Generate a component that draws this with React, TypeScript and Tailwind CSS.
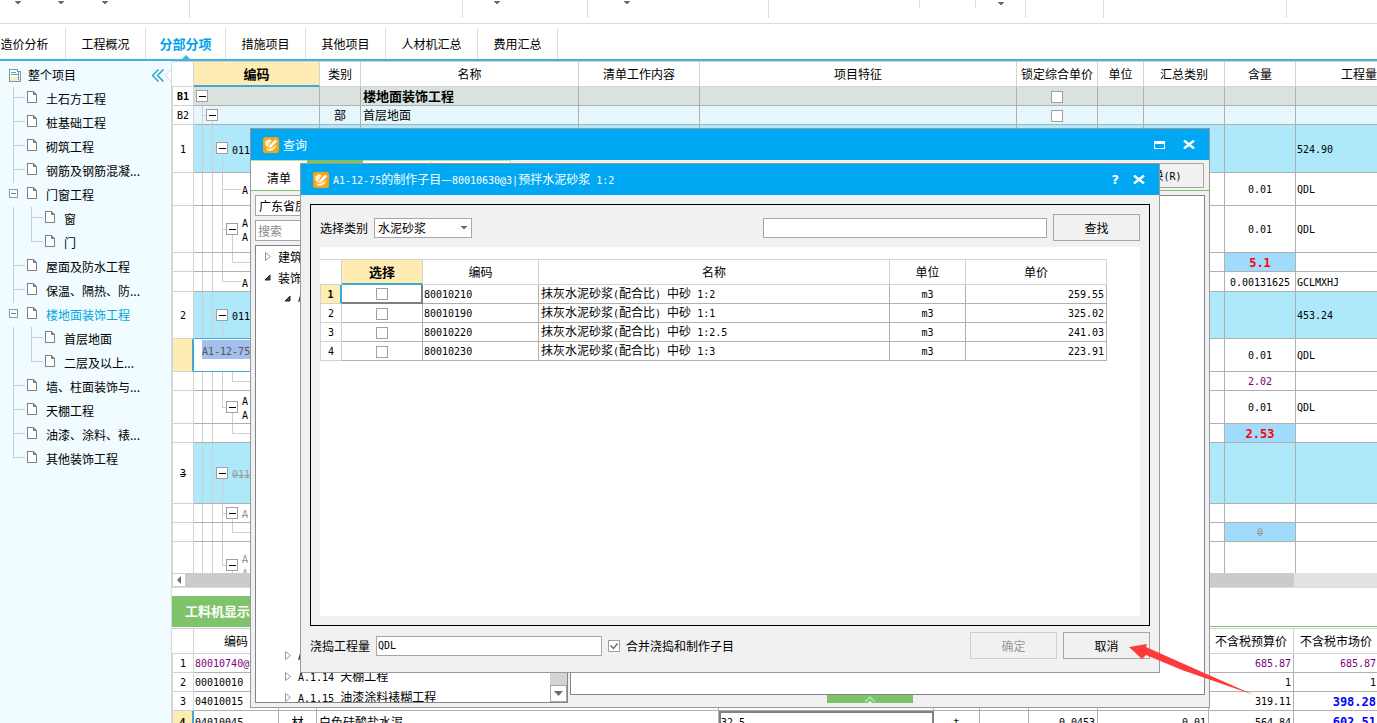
import clsx from "clsx";
import type { ReactNode } from "react";

interface TextProps {
  children: string;
}

// 英数字は等幅、漢字は全角 12px で描く
function Mixed({ children }: TextProps) {
  return (
    <>
      {children.split(/([\x20-\x7e]+)/).map((part, i) =>
        i % 2 ? (
          <span
            key={`${i}-${part}`}
            className="whitespace-pre font-['DejaVu_Sans_Mono',monospace] text-[10px]"
          >
            {part}
          </span>
        ) : (
          part
        ),
      )}
    </>
  );
}

function Caret() {
  return (
    <svg width="6" height="4" viewBox="0 0 6 4" aria-hidden="true">
      <path d="M0 0h6v1H5v1H4v1H2V2H1V1H0z" fill="#6b6b7b" />
    </svg>
  );
}

function AppIcon() {
  return (
    <svg width="16" height="16" viewBox="0 0 16 16" aria-hidden="true">
      <rect width="16" height="16" rx="2.500" fill="#fba413" />
      <path d="M2 4.500L6 2l3 1.500L6 7l-1 4-2.500-3z" fill="#fff3dc" />
      <path d="M6.500 8.500l5.500-6 2.200 1.800-5.700 6-2.800.7z" fill="#fff" />
      <path d="M2.500 10.500C4 12.500 9 12.500 13.500 7.500 13 12 8.500 15 4.500 13.500z" fill="#fff3dc" />
    </svg>
  );
}

function CloseIcon() {
  return (
    <svg width="12" height="9" viewBox="0 0 12 9" aria-hidden="true">
      <path d="M1 .5l10 8M11 .5l-10 8" stroke="#fff" strokeWidth="2.4" />
    </svg>
  );
}

function CheckBox({ label, checked }: { label: string; checked?: boolean }) {
  return (
    <span className="relative inline-block size-3 align-middle">
      <input
        type="checkbox"
        aria-label={label}
        defaultChecked={checked}
        className="peer block size-3 appearance-none border border-[#a0a0a0] bg-white"
      />
      <svg
        className="pointer-events-none absolute inset-0 hidden peer-checked:block"
        width="12"
        height="12"
        aria-hidden="true"
      >
        <path d="M2.5 5.5l3 3 4-5" fill="none" stroke="#6b6b7b" strokeWidth="1.5" />
      </svg>
    </span>
  );
}

// ---- 上部のツールバーとタブ ----

interface ToolGroup {
  className: string;
  carets?: string[];
}

const toolGroups: ToolGroup[] = [
  { className: "w-[190px]", carets: ["w-9", "w-[50px] pt-px", "w-[38px]"] },
  { className: "w-[273px]" },
  { className: "w-[125px]", carets: ["w-[67px]"] },
  { className: "w-[181px]", carets: ["w-[78px]"] },
];

const tabs = [
  { label: "造价分析", className: "w-[66px] pr-4" },
  { label: "工程概况", className: "w-20" },
  { label: "分部分项", className: "w-20", active: true },
  { label: "措施项目", className: "w-20" },
  { label: "其他项目", className: "w-20" },
  { label: "人材机汇总", className: "w-[92px]" },
  { label: "费用汇总", className: "w-20" },
];

function Toolbar() {
  return (
    <div className="h-6 shrink-0 border-b border-[#dcdcdc]">
      <div className="flex h-[18px]">
        {toolGroups.map((group) => (
          <div
            key={group.className}
            className={clsx("flex shrink-0 items-start border-r border-[#dcdcdc]", group.className)}
          >
            {group.carets?.map((caret) => (
              <button
                key={caret}
                type="button"
                aria-label="更多"
                className={clsx("flex justify-center pt-px", caret)}
              >
                <Caret />
              </button>
            ))}
          </div>
        ))}
        <div className="flex w-[257px] shrink-0 border-r border-[#dcdcdc]">
          <div className="h-2 w-[151px] border-r border-[#dcdcdc]" />
          <div className="h-2 w-14 border-r border-[#dcdcdc]" />
          <button type="button" aria-label="更多" className="flex w-[49px] justify-center pt-0.5">
            <Caret />
          </button>
        </div>
        <div className="w-[78px] shrink-0 border-r border-[#dcdcdc]" />
        <div className="w-[183px] shrink-0 border-r border-[#dcdcdc]" />
      </div>
    </div>
  );
}

function TabBar() {
  return (
    <nav className="flex h-[37px] shrink-0 items-end border-b-2 border-[#3fb4de]">
      {tabs.map((tab) => (
        <button
          key={tab.label}
          type="button"
          className={clsx(
            "relative flex h-[31px] items-center justify-center border-r border-[#dcdcdc]",
            tab.className,
            tab.active && "text-[13px] font-bold text-[#00a2ea]",
          )}
        >
          {tab.label}
          {tab.active && (
            <svg className="absolute bottom-0 left-9" width="8" height="4" aria-hidden="true">
              <path d="M0 4l4-4 4 4z" fill="#3fb4de" />
            </svg>
          )}
        </button>
      ))}
    </nav>
  );
}

// ---- 左のプロジェクトツリー ----

interface ProjectNode {
  label: string;
  child?: boolean;
  open?: boolean;
  last?: boolean;
  active?: boolean;
}

const projectNodes: ProjectNode[] = [
  { label: "土石方工程" },
  { label: "桩基础工程" },
  { label: "砌筑工程" },
  { label: "钢筋及钢筋混凝..." },
  { label: "门窗工程", open: true },
  { label: "窗", child: true },
  { label: "门", child: true, last: true },
  { label: "屋面及防水工程" },
  { label: "保温、隔热、防..." },
  { label: "楼地面装饰工程", open: true, active: true },
  { label: "首层地面", child: true },
  { label: "二层及以上...", child: true, last: true },
  { label: "墙、柱面装饰与..." },
  { label: "天棚工程" },
  { label: "油漆、涂料、裱..." },
  { label: "其他装饰工程", last: true },
];

function ProjectRow({ node }: { node: ProjectNode }) {
  const x = node.child ? 31 : 13;
  const width = node.child ? 56 : 38;
  return (
    <li className="flex h-6 items-center">
      <svg
        width={width}
        height="24"
        className="shrink-0"
        shapeRendering="crispEdges"
        fill="none"
        stroke="#c4cdd0"
        aria-hidden="true"
      >
        {node.child && <path d="M13.5 0v24" />}
        {node.open ? (
          <>
            <rect x="9.5" y="6.5" width="8" height="8" stroke="#8f9a9e" fill="#fff" />
            <path d="M11 10.5h5" stroke="#2a9dc4" />
          </>
        ) : (
          <path d={`M${x + 0.5} 0V${node.last ? 11 : 24}M${x} 10.5h12`} />
        )}
        <path
          d={`M${width - 10.5} 4.5h6l3 3v8h-9z`}
          stroke="#808080"
          fill="#fff"
        />
        <path d={`M${width - 5} 4l4 4h-4z`} stroke="none" fill="#808080" />
      </svg>
      <a
        href="#project"
        className={clsx("whitespace-nowrap pl-2", node.active && "text-[#00a6dd]")}
      >
        {node.label}
      </a>
    </li>
  );
}

function Sidebar() {
  return (
    <aside className="w-[172px] shrink-0 border-r border-[#d8d8d8] bg-[#f0fcff] pt-0.5">
      <div className="flex h-6 items-center pl-[9px]">
        <svg width="12" height="13" shapeRendering="crispEdges" aria-hidden="true">
          <path d="M.5.5h8v2h3v10H.5z" fill="#fff" stroke="#8a9194" />
          <path d="M1 8h10v4H1z" fill="#fdebb8" />
          <path d="M2 3.5h5M2 5.5h7M9.500 3v8" stroke="#39a9d6" />
        </svg>
        <span className="flex-1 pl-[7px]">整个项目</span>
        <button type="button" aria-label="收起" className="pr-px">
          <svg width="12" height="13" fill="none" stroke="#2aa3cc" strokeWidth="1.5" aria-hidden="true">
            <path d="M6.500 .5l-6 6 6 6M11.500 .5l-6 6 6 6" />
          </svg>
        </button>
        <svg width="6" height="13" className="shrink-0" aria-hidden="true">
          <path d="M6 .5L.5 6.500 6 12.500" fill="#fff" stroke="#d8d8d8" />
        </svg>
      </div>
      <ul>
        {projectNodes.map((node) => (
          <ProjectRow key={node.label} node={node} />
        ))}
      </ul>
    </aside>
  );
}

// ---- 清单の表 ----

interface BillRow {
  id: string;
  no?: string;
  height: number;
  level: number;
  box?: boolean;
  last?: boolean;
  hideParent?: boolean;
  codes?: string[];
  deleted?: boolean;
  editing?: boolean;
  tone?: "head" | "part" | "item";
  kind?: string;
  name?: string;
  lock?: boolean;
  amount?: string;
  amountClass?: string;
  quantity?: string;
}

const diffAmount = "bg-[#a0dbfc] font-bold text-[#f00] [&_span]:text-[12px]";

const billRows: BillRow[] = [
  { id: "b1", no: "B1", height: 19, level: 0, box: true, tone: "head", name: "楼地面装饰工程", lock: true },
  { id: "b2", no: "B2", height: 19, level: 1, box: true, tone: "part", kind: "部", name: "首层地面", lock: true },
  { id: "r1", no: "1", height: 48, level: 2, box: true, codes: ["011"], tone: "item", quantity: "524.90" },
  { id: "r1a", height: 33, level: 3, codes: ["A"], amount: "0.01", quantity: "QDL" },
  { id: "r1b", height: 47, level: 3, box: true, codes: ["A", "A"], amount: "0.01", quantity: "QDL" },
  { id: "r1c", height: 19, level: 4, last: true, amount: "5.1", amountClass: diffAmount },
  { id: "r1d", height: 20, level: 3, last: true, codes: ["A"], amount: "0.00131625", quantity: "GCLMXHJ" },
  { id: "r2", no: "2", height: 47, level: 2, box: true, codes: ["011"], tone: "item", quantity: "453.24" },
  { id: "r2a", height: 33, level: 3, editing: true, codes: ["A1-12-75"], amount: "0.01", quantity: "QDL" },
  { id: "r2b", height: 19, level: 4, last: true, amount: "2.02", amountClass: "text-[#800080]" },
  { id: "r2c", height: 33, level: 3, box: true, last: true, codes: ["A", "A"], amount: "0.01", quantity: "QDL" },
  { id: "r2d", height: 19, level: 4, last: true, hideParent: true, amount: "2.53", amountClass: diffAmount },
  { id: "r3", no: "3", height: 61, level: 2, box: true, codes: ["011"], deleted: true, tone: "item" },
  { id: "r3a", height: 19, level: 3, box: true, codes: ["A"], deleted: true },
  { id: "r3b", height: 19, level: 4, last: true, amount: "0", amountClass: "bg-[#a0dbfc] text-[#999] [&_span]:line-through" },
  { id: "r3c", height: 47, level: 3, box: true, last: true, codes: ["A", "A"], deleted: true },
];

const tones = {
  head: "bg-[#dae2de]",
  part: "bg-[#e5f7fc]",
  item: "bg-[#aee8fb]",
};

function BillTree({ row }: { row: BillRow }) {
  const height = row.height - 1;
  const mid = Math.floor(height / 2) + 0.5;
  const lineX = (level: number) => 8.5 + level * 10;
  const own = lineX(row.level);
  const parent = lineX(row.level - 1);
  let d = "";
  for (let i = 0; i < row.level - 1; i++) {
    if (row.hideParent && i === row.level - 2) continue;
    d += `M${lineX(i)} 0V${height}`;
  }
  if (row.level > 0) {
    d += `M${parent} 0V${row.last ? mid : height}M${parent} ${mid}H${row.box ? own : own + 8}`;
  }
  if (row.box) d += `M${own} ${mid}V${height}`;

  return (
    <svg
      width={18 + row.level * 10}
      height={height}
      className="shrink-0"
      shapeRendering="crispEdges"
      fill="none"
      stroke="#cfcfcf"
      aria-hidden="true"
    >
      <path d={d} />
      {row.box && (
        <>
          <rect x={own - 6} y={mid - 6} width="11" height="11" fill="#fff" stroke="#a0a0a0" />
          <path d={`M${own - 3.500} ${mid}h7`} stroke="#000" />
        </>
      )}
    </svg>
  );
}

const cell = "border-b border-r border-[#b0b0b0] p-0 whitespace-nowrap overflow-hidden";
const headCell =
  "border-b border-r border-t border-[#d3d3d3] bg-white p-0 font-normal whitespace-nowrap overflow-hidden";
const rowHead = "border-b border-r border-l border-[#d3d3d3] p-0";

function BillTable() {
  return (
    <table className="w-[1251px] table-fixed border-separate border-spacing-0">
      <colgroup>
        <col className="w-[22px]" />
        <col className="w-[126px]" />
        <col className="w-[41px]" />
        <col className="w-[218px]" />
        <col className="w-[121px]" />
        <col className="w-[317px]" />
        <col className="w-[81px]" />
        <col className="w-[46px]" />
        <col className="w-[81px]" />
        <col className="w-[71px]" />
        <col className="w-[127px]" />
      </colgroup>
      <thead>
        <tr className="h-[26px]">
          <th className={headCell} aria-label="序号" />
          <th className="border-b-2 border-r border-t border-b-[#3da9d4] border-r-[#d3d3d3] border-t-[#d3d3d3] bg-[#feecb2] p-0 text-[13px] font-bold">
            编码
          </th>
          {["类别", "名称", "清单工作内容", "项目特征", "锁定综合单价", "单位", "汇总类别", "含量", "工程量"].map(
            (label) => (
              <th key={label} className={headCell}>
                {label}
              </th>
            ),
          )}
        </tr>
      </thead>
      <tbody>
        {billRows.map((row) => (
          <tr key={row.id} style={{ height: row.height }} className={row.tone && tones[row.tone]}>
            <th
              className={clsx(
                rowHead,
                row.editing ? "border-r-2 border-r-[#3da9d4] bg-[#feecb2]" : "bg-white",
                row.tone === "head" ? "font-bold" : "font-normal",
                row.deleted && "[&_span]:line-through",
              )}
            >
              <Mixed>{row.no ?? ""}</Mixed>
            </th>
            {row.editing ? (
              <td className="border-b border-r border-b-[#3da9d4] border-r-[#b0b0b0] p-0 pl-2 pb-2 align-middle shadow-[0_-1px_0_#3da9d4]">
                <span className="bg-[#a3c0ec] py-px text-[#555]">
                  <Mixed>{row.codes?.[0] ?? ""}</Mixed>
                </span>
              </td>
            ) : (
              <td className={cell}>
                <div className="flex items-center">
                  <BillTree row={row} />
                  <div className={clsx("leading-[14px]", row.deleted && "text-[#999] [&_span]:line-through")}>
                    {row.codes?.map((code, i) => (
                      <div key={`${code}-${i}`} className="h-[14px]">
                        <Mixed>{code}</Mixed>
                      </div>
                    ))}
                  </div>
                </div>
              </td>
            )}
            <td className={clsx(cell, "text-center")}>{row.kind}</td>
            <td className={clsx(cell, "pl-0.5", row.tone === "head" && "text-[13px] font-bold")}>
              {row.name}
            </td>
            <td className={cell} />
            <td className={cell} />
            <td className={clsx(cell, "text-center leading-[12px]")}>
              {row.lock && <CheckBox label="锁定综合单价" />}
            </td>
            <td className={cell} />
            <td className={cell} />
            <td className={clsx(cell, "text-center", row.amountClass)}>
              <Mixed>{row.amount ?? ""}</Mixed>
            </td>
            <td className={clsx(cell, "pl-px")}>
              <Mixed>{row.quantity ?? ""}</Mixed>
            </td>
          </tr>
        ))}
      </tbody>
    </table>
  );
}

// ---- 工料机の表 ----

const purple = "text-[#800080]";
const blue = "font-bold text-[#00f] [&_span]:text-[12px]";

const resourceRows = [
  { code: "80010740@", budget: "685.87", market: "685.87", codeClass: purple, budgetClass: purple, marketClass: purple },
  { code: "00010010", budget: "1", market: "1" },
  { code: "04010015", budget: "319.11", market: "398.28", marketClass: blue },
  {
    code: "04010045",
    kind: "材",
    name: "白色硅酸盐水泥",
    spec: "32.5",
    unit: "t",
    usage: "0.0453",
    total: "0.01",
    budget: "564.84",
    market: "602.51",
    marketClass: blue,
    current: true,
  },
];

function ResourceTable() {
  return (
    <table className="w-[1207px] table-fixed border-separate border-spacing-0">
      <colgroup>
        <col className="w-[22px]" />
        <col className="w-[85px]" />
        <col className="w-[38px]" />
        <col className="w-[402px]" />
        <col className="w-[215px]" />
        <col className="w-[46px]" />
        <col className="w-[49px]" />
        <col className="w-[69px]" />
        <col className="w-[111px]" />
        <col className="w-[85px]" />
        <col className="w-[85px]" />
      </colgroup>
      <thead>
        <tr className="h-[26px]">
          <th className={headCell} aria-label="序号" />
          <th className={headCell}>编码</th>
          <th className={headCell} colSpan={7} aria-label="材料" />
          <th className={headCell}>不含税预算价</th>
          <th className={headCell}>不含税市场价</th>
        </tr>
      </thead>
      <tbody>
        {resourceRows.map((row, i) => (
          <tr key={row.code} className="h-[19px]">
            <th
              className={clsx(
                rowHead,
                row.current ? "border-r-2 border-r-[#3da9d4] bg-[#feecb2] font-bold" : "font-normal",
              )}
            >
              <Mixed>{String(i + 1)}</Mixed>
            </th>
            <td className={clsx(cell, "pl-px", row.codeClass)}>
              <Mixed>{row.code}</Mixed>
            </td>
            <td className={clsx(cell, "text-center")}>{row.kind}</td>
            <td className={clsx(cell, "pl-0.5")}>{row.name}</td>
            <td className={row.current ? "border-2 border-[#808080] p-0" : cell}>
              <Mixed>{row.spec ?? ""}</Mixed>
            </td>
            <td className={clsx(cell, "text-center")}>
              <Mixed>{row.unit ?? ""}</Mixed>
            </td>
            <td className={cell} />
            <td className={clsx(cell, "pr-0.5 text-right")}>
              <Mixed>{row.usage ?? ""}</Mixed>
            </td>
            <td className={clsx(cell, "pr-0.5 text-right")}>
              <Mixed>{row.total ?? ""}</Mixed>
            </td>
            <td className={clsx(cell, "pr-0.5 text-right", row.budgetClass)}>
              <Mixed>{row.budget}</Mixed>
            </td>
            <td className={clsx(cell, "pr-0.5 text-right", row.marketClass)}>
              <Mixed>{row.market}</Mixed>
            </td>
          </tr>
        ))}
      </tbody>
    </table>
  );
}

// ---- ダイアログ ----

interface DialogTitleProps {
  title: string;
  children: ReactNode;
}

function DialogTitle({ title, children }: DialogTitleProps) {
  return (
    <header className="flex h-[31px] shrink-0 items-center bg-[#00a8f3] pl-3 pr-[14px] text-white">
      <AppIcon />
      <h2 className="flex-1 pl-1">
        <Mixed>{title}</Mixed>
      </h2>
      {children}
    </header>
  );
}

function Closed() {
  return (
    <svg width="9" height="9" className="shrink-0" fill="none" stroke="#999" aria-hidden="true">
      <path d="M2.500 .5v8l5-4z" />
    </svg>
  );
}

function Opened() {
  return (
    <svg width="9" height="9" className="shrink-0" aria-hidden="true">
      <path d="M7 2v5H2z" fill="#505050" stroke="#222" />
    </svg>
  );
}

function QueryDialog() {
  return (
    <section className="absolute left-[250px] top-[128px] flex h-[580px] w-[960px] flex-col border border-[#999] bg-[#f1f1f1]">
      <DialogTitle title="查询">
        <button type="button" aria-label="最大化" className="mr-[18px]">
          <svg width="11" height="8" shapeRendering="crispEdges" aria-hidden="true">
            <path d="M0 0h11v8H0zM1 3v4h9V3z" fill="#fff" fillRule="evenodd" />
          </svg>
        </button>
        <button type="button" aria-label="关闭">
          <CloseIcon />
        </button>
      </DialogTitle>
      <div className="flex h-[31px] shrink-0 items-start border-b border-[#7cc36a]">
        <button type="button" className="h-[30px] w-14 border-t border-[#b5e2a4] bg-white pt-1">
          清单
        </button>
        <button type="button" aria-label="定额" className="h-[30px] w-14 bg-[#7cc36a]" />
        <div className="h-[30px] w-[68px] border-r border-t border-[#b5e2a4] bg-white" />
        <div className="h-[30px] w-20 border-r border-t border-[#b5e2a4] bg-white" />
        <button
          type="button"
          className="ml-auto mr-[5px] mt-[3px] h-[25px] w-[87px] border border-[#a6a6a6]"
        >
          <Mixed>替换(R)</Mixed>
        </button>
      </div>
      <div className="flex min-h-0 flex-1 gap-[2px] p-1">
        <div className="flex w-[313px] shrink-0 flex-col gap-1">
          <select
            aria-label="定额库"
            className="h-[21px] shrink-0 appearance-none border border-[#a6a6a6] bg-white px-[3px]"
          >
            <option>广东省房</option>
          </select>
          <input
            type="text"
            placeholder="搜索"
            aria-label="搜索"
            className="h-[21px] shrink-0 border border-[#a6a6a6] bg-white px-0.5 placeholder:text-[#888]"
          />
          <div className="flex min-h-0 flex-1 overflow-hidden border border-[#828490] bg-white">
            <ul className="flex-1">
              <li className="flex h-[21px] items-center gap-[6px] pl-[7px]">
                <Closed />
                建筑
              </li>
              <li className="flex h-[21px] items-center gap-[6px] pl-[7px]">
                <Opened />
                装饰
              </li>
              <li className="flex h-[21px] items-center gap-[6px] pl-[27px]">
                <Opened />
                <Mixed>A</Mixed>
              </li>
              <li className="h-[336px]" />
              {["A", "A.1.14 天棚工程", "A.1.15 油漆涂料裱糊工程"].map((label) => (
                <li key={label} className="flex h-[21px] items-center gap-[6px] pl-[27px]">
                  <Closed />
                  <span>
                    <Mixed>{label}</Mixed>
                  </span>
                </li>
              ))}
            </ul>
            <div className="flex w-[17px] flex-col justify-end bg-[#d3d3d3]">
              <button
                type="button"
                aria-label="向下滚动"
                className="flex h-[17px] items-center justify-center border border-[#a6a6a6] bg-white"
              >
                <svg width="9" height="5" aria-hidden="true">
                  <path d="M0 0h9L4.500 5z" fill="#6b6b7b" />
                </svg>
              </button>
            </div>
          </div>
        </div>
        <div className="flex flex-1 flex-col items-center">
          <div className="w-full flex-1 border border-[#828490] bg-white" />
          <div className="mr-9 flex h-2 w-[86px] items-end justify-center bg-[#7cc36a]">
            <svg width="10" height="7" fill="none" aria-hidden="true">
              <path d="M0 6l5-5 5 5" stroke="#b9e3ad" strokeWidth="1.500" />
              <path d="M3 7l2-2 2 2z" fill="#fff" />
            </svg>
          </div>
        </div>
      </div>
    </section>
  );
}

const mortars = [
  { code: "80010210", name: "抹灰水泥砂浆(配合比) 中砂 1:2", price: "259.55" },
  { code: "80010190", name: "抹灰水泥砂浆(配合比) 中砂 1:1", price: "325.02" },
  { code: "80010220", name: "抹灰水泥砂浆(配合比) 中砂 1:2.5", price: "241.03" },
  { code: "80010230", name: "抹灰水泥砂浆(配合比) 中砂 1:3", price: "223.91" },
];

function MortarTable() {
  return (
    <table className="w-[787px] table-fixed border-separate border-spacing-0">
      <colgroup>
        <col className="w-[22px]" />
        <col className="w-[81px]" />
        <col className="w-[116px]" />
        <col className="w-[351px]" />
        <col className="w-[76px]" />
        <col className="w-[141px]" />
      </colgroup>
      <thead>
        <tr className="h-[26px]">
          <th className={headCell} aria-label="序号" />
          <th className="border-b-2 border-r border-t border-b-[#3da9d4] border-r-[#d3d3d3] border-t-[#d3d3d3] bg-[#feecb2] p-0 text-[13px] font-bold">
            选择
          </th>
          {["编码", "名称", "单位", "单价"].map((label) => (
            <th key={label} className={headCell}>
              {label}
            </th>
          ))}
        </tr>
      </thead>
      <tbody>
        {mortars.map((row, i) => (
          <tr key={row.code} className="h-[19px]">
            <th
              className={clsx(
                rowHead,
                i === 0 ? "border-r-2 border-r-[#3da9d4] bg-[#feecb2] font-bold" : "font-normal",
              )}
            >
              <Mixed>{String(i + 1)}</Mixed>
            </th>
            <td
              className={clsx(
                "p-0 text-center leading-[12px]",
                i === 0 ? "border-b-2 border-r-2 border-[#808080]" : "border-b border-r border-[#b0b0b0]",
              )}
            >
              <CheckBox label={`选择 ${row.code}`} />
            </td>
            <td className={clsx(cell, "pl-px")}>
              <Mixed>{row.code}</Mixed>
            </td>
            <td className={clsx(cell, "pl-0.5")}>
              <Mixed>{row.name}</Mixed>
            </td>
            <td className={clsx(cell, "text-center")}>
              <Mixed>m3</Mixed>
            </td>
            <td className={clsx(cell, "pr-0.5 text-right")}>
              <Mixed>{row.price}</Mixed>
            </td>
          </tr>
        ))}
      </tbody>
    </table>
  );
}

function MortarDialog() {
  return (
    <section className="absolute left-[300px] top-[163px] flex h-[510px] w-[860px] flex-col border border-[#999] bg-[#f1f1f1]">
      <DialogTitle title="A1-12-75的制作子目—80010630@3|预拌水泥砂浆 1:2">
        <button
          type="button"
          aria-label="帮助"
          className="mr-[14px] font-['DejaVu_Sans',sans-serif] text-[13px] font-bold"
        >
          ?
        </button>
        <button type="button" aria-label="关闭">
          <CloseIcon />
        </button>
      </DialogTitle>
      <div className="mx-[9px] mt-[9px] flex min-h-0 flex-1 flex-col border border-black px-[9px] pb-[9px]">
        <div className="flex h-[42px] shrink-0 items-center pt-[3px]">
          <label htmlFor="category">选择类别</label>
          <span className="relative ml-[6px]">
            <select
              id="category"
              className="block h-5 w-[98px] appearance-none border border-[#a6a6a6] bg-white px-[3px]"
            >
              <option>水泥砂浆</option>
            </select>
            <span className="pointer-events-none absolute inset-y-0 right-[5px] flex items-center">
              <Caret />
            </span>
          </span>
          <input
            type="text"
            aria-label="关键字"
            className="ml-auto h-5 w-[284px] border border-[#a6a6a6] bg-white px-1"
          />
          <button type="button" className="ml-[6px] h-[27px] w-[87px] border border-[#a6a6a6]">
            查找
          </button>
        </div>
        <div className="flex-1 bg-white pt-3">
          <MortarTable />
        </div>
      </div>
      <div className="flex h-[46px] shrink-0 items-start px-[9px] pt-[6px]">
        <div className="flex h-[27px] flex-1 items-center">
          <label htmlFor="quantity">浇捣工程量</label>
          <input
            id="quantity"
            type="text"
            defaultValue="QDL"
            className="ml-[6px] h-5 w-[226px] border border-[#a6a6a6] bg-white px-px font-['DejaVu_Sans_Mono',monospace] text-[10px]"
          />
          <label className="ml-[6px] flex items-center gap-[6px]">
            <CheckBox label="合并浇捣和制作子目" checked />
            合并浇捣和制作子目
          </label>
        </div>
        <button
          type="button"
          disabled
          className="h-[27px] w-[87px] border border-[#cfcfcf] text-[#999]"
        >
          确定
        </button>
        <button type="button" className="ml-[6px] h-[27px] w-[87px] border border-[#a6a6a6]">
          取消
        </button>
      </div>
    </section>
  );
}

export default function App() {
  return (
    <div className="relative flex h-screen flex-col overflow-hidden bg-white font-['Noto_Sans_CJK_SC',sans-serif] text-[12px] leading-[16px] text-black">
      <Toolbar />
      <TabBar />
      <div className="flex min-h-0 flex-1">
        <Sidebar />
        <main className="flex min-w-0 flex-1 flex-col">
          <div className="min-h-0 flex-1 overflow-hidden">
            <BillTable />
          </div>
          <div className="flex h-[150px] shrink-0 flex-col overflow-hidden">
            <div className="flex h-[15px] shrink-0 border-b border-[#dcdcdc] bg-[#e2e2e2]">
              <button
                type="button"
                aria-label="向左滚动"
                className="flex w-[14px] shrink-0 items-center justify-center border border-[#cfcfcf] bg-white"
              >
                <svg width="4" height="8" aria-hidden="true">
                  <path d="M4 0v8L0 4z" fill="#6b6b7b" />
                </svg>
              </button>
              <div className="w-[1108px] shrink-0 bg-[#cbcbcb]" />
            </div>
            <div className="mb-px mt-2 flex h-[31px] shrink-0 border-b border-[#7cc36a]">
              <button
                type="button"
                className="w-[92px] bg-[#7fc46b] pl-[13px] text-left text-[13px] font-bold whitespace-nowrap text-white"
              >
                工料机显示
              </button>
            </div>
            <ResourceTable />
          </div>
        </main>
      </div>
      <QueryDialog />
      <MortarDialog />
      <svg
        className="pointer-events-none absolute left-[1129px] top-[643px]"
        width="126"
        height="53"
        aria-hidden="true"
      >
        <path d="M0 4L18 1l-1 3 38 17 70 31-72-25-36-15-4 4z" fill="#fd3a3a" />
      </svg>
    </div>
  );
}
